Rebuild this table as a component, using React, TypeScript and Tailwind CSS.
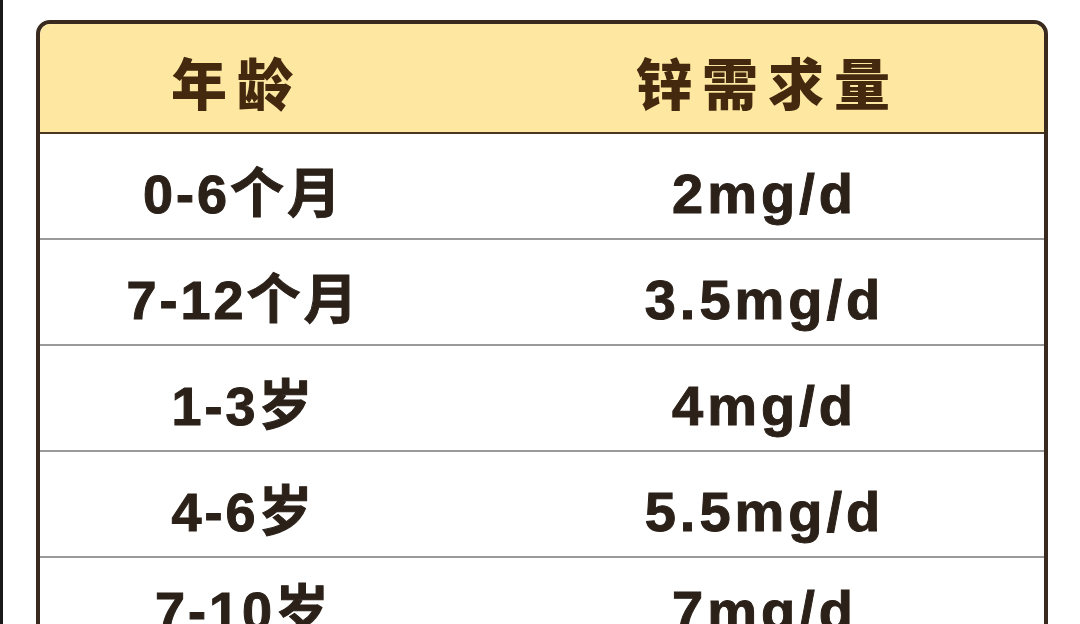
import React from 'react';

const rows = [
    { age: '0-6个月', zinc: '2mg/d' },
    { age: '7-12个月', zinc: '3.5mg/d' },
    { age: '1-3岁', zinc: '4mg/d' },
    { age: '4-6岁', zinc: '5.5mg/d' },
    { age: '7-10岁', zinc: '7mg/d' },
    { age: '11-13岁', zinc: '10mg/d' },
];

const font = { fontFamily: '"Liberation Sans", "Noto Sans CJK SC", sans-serif' };

export default function App() {
    return (
        <div className="h-[624px] w-[1080px] overflow-hidden bg-white flex" style={font}>
            <div className="w-[3px] h-full bg-[#1a1a1a] shrink-0" />
            <div className="pl-[33px] pt-[20px]">
                <div className="w-[1012px] border-[4px] border-[#3a2a1e] rounded-[14px] overflow-hidden">
                    <div className="flex h-[110px] bg-[#fee7a1] border-b-2 border-[#4a3520] items-center pt-[6px] text-[#45290f] font-black text-[56px] leading-none [font-family:'Noto_Sans_CJK_SC',sans-serif]">
                        <div className="w-[384px] text-center tracking-[10px] pl-[10px]">年龄</div>
                        <div className="flex-1 text-center pl-[68px] tracking-[10px]">锌需求量</div>
                    </div>
                    {rows.map((r, i) => (
                        <div key={i} className={`flex h-[106px] items-center ${i === 4 ? 'pt-[2px]' : 'pt-[16px]'} bg-white border-b-2 border-[#9a9a9a] text-[#2b2119] font-bold leading-none [-webkit-text-stroke:1px_#2b2119]`}>
                            <div className="w-[384px] text-center tracking-[3px] text-[54px] pl-[23px]">{r.age}</div>
                            <div className="flex-1 text-center pl-[61px] tracking-[4px] text-[56px]">{r.zinc}</div>
                        </div>
                    ))}
                </div>
            </div>
        </div>
    );
}
